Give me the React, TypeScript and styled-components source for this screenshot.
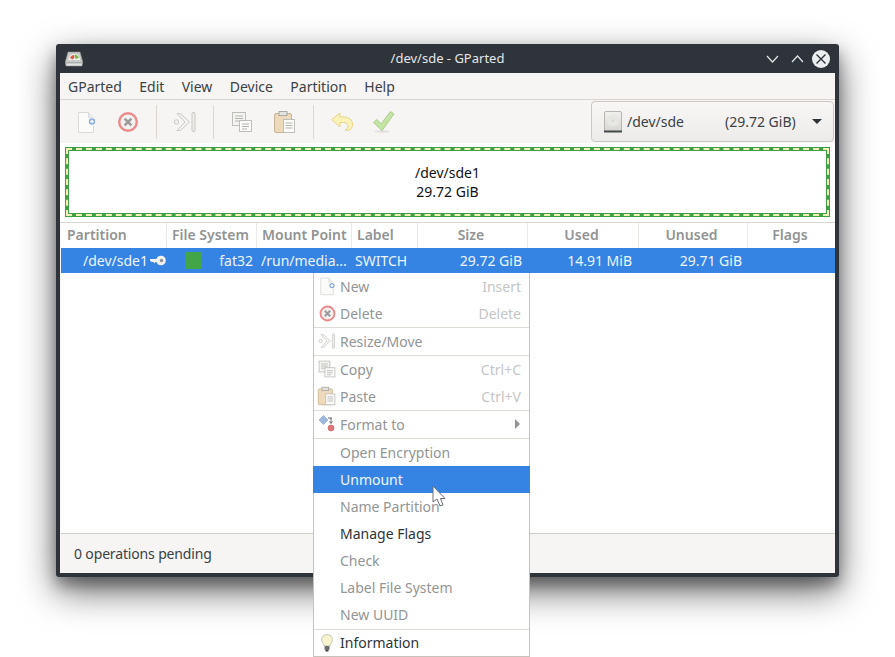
import styled, { createGlobalStyle } from 'styled-components';

const GlobalStyle = createGlobalStyle`
  html, body {
    margin: 0;
    height: 100%;
    background: #fff;
    overflow: hidden;
    font-family: "Noto Sans", sans-serif;
    font-size: 14px;
    color: #2e3436;
  }
`;

const Window = styled.div`
  position: relative;
  width: 783px;
  height: 533px;
  margin: 44px 0 0 56px;
  display: flex;
  flex-direction: column;
  background: #2f343a;
  border-radius: 3px;
  box-shadow: 0 14px 36px rgba(0, 0, 0, 0.6), 0 8px 14px rgba(0, 0, 0, 0.3);
`;

const TitleBar = styled.div`
  position: relative;
  height: 29px;
  flex: none;
  display: flex;
  align-items: center;
  justify-content: space-between;
  padding: 0 9px 0 9px;
  color: #e4e6e8;
  font-size: 13px;
`;

const Title = styled.div`
  position: absolute;
  left: 0;
  right: 0;
  padding-bottom: 2px;
  text-align: center;
`;

const WindowButtons = styled.div`
  display: flex;
  align-items: center;
`;

const CloseButton = styled.svg`
  margin-left: 2px;
`;

const Content = styled.div`
  flex: 1;
  min-height: 0;
  margin: 0 4px 4px;
  display: flex;
  flex-direction: column;
  background: #f6f5f4;
`;

const MenuBar = styled.div`
  height: 27px;
  box-sizing: border-box;
  flex: none;
  display: flex;
  align-items: center;
  gap: 17.4px;
  padding: 0 8px;
  border-bottom: 1px solid #d8d5d1;
  color: #3b4144;
`;

const ToolBar = styled.div`
  height: 43px;
  flex: none;
  display: flex;
  align-items: center;
  padding: 0 1px 0 5px;
`;

const ToolGroup = styled.div<{ $gap?: number }>`
  display: flex;
  gap: ${p => p.$gap ?? 0}px;
`;

const ToolButton = styled.div`
  width: 42px;
  height: 34px;
  display: flex;
  align-items: center;
  justify-content: center;
`;

const ToolSeparator = styled.div`
  width: 1px;
  height: 34px;
  background: #dbd8d4;
  margin: 0 7px;
`;

const DeviceCombo = styled.div`
  margin-left: auto;
  width: 243px;
  height: 41px;
  box-sizing: border-box;
  display: flex;
  align-items: center;
  padding: 0 11px 0 12px;
  border: 1px solid #cdc7c2;
  border-radius: 4px;
  background: linear-gradient(#f8f7f6, #edebe9);
  color: #3b4144;
`;

const DeviceName = styled.span`
  margin-left: 5px;
  width: 98px;
`;

const DeviceSize = styled.span`
  flex: 1;
`;

const ComboArrow = styled.span`
  width: 0;
  height: 0;
  border-top: 5px solid #2e3436;
  border-left: 5px solid transparent;
  border-right: 5px solid transparent;
`;

const GraphArea = styled.div`
  height: 80px;
  flex: none;
  box-sizing: border-box;
  padding: 4px 5px 5px;
  background: #fff;
  border-bottom: 1px solid #d8d5d1;
`;

const GraphOuter = styled.div`
  height: 100%;
  box-sizing: border-box;
  border: 1px solid #3f9f44;
  background: #3f9f44;
`;

const GraphDash = styled.div`
  height: 100%;
  box-sizing: border-box;
  border: 2px dashed #f2f2b8;
`;

const GraphInner = styled.div`
  height: 100%;
  box-sizing: border-box;
  background: #fff;
  display: flex;
  flex-direction: column;
  align-items: center;
  justify-content: center;
  border: 1px solid #3f9f44;
  color: #111;
  line-height: 19px;
`;

const TableArea = styled.div`
  flex: 1;
  min-height: 0;
  margin: 0 0 0 1px;
  background: #fff;
  border-bottom: 1px solid #d0ccc8;
`;

const columns = '105px 90px 95px 66px 110px 111px 109px 88px';

const HeaderRow = styled.div`
  height: 25px;
  display: grid;
  grid-template-columns: ${columns};
`;

const HeaderCell = styled.div<{ $center?: boolean }>`
  display: flex;
  align-items: center;
  justify-content: ${p => (p.$center ? 'center' : 'flex-start')};
  padding-left: ${p => (p.$center ? 0 : 5)}px;
  padding-right: ${p => (p.$center ? 3 : 0)}px;
  padding-bottom: 2px;
  font-weight: 600;
  color: #919394;
  white-space: nowrap;
  border-left: 1px solid #eceae8;
  &:first-child {
    border-left: none;
    padding-left: 6px;
  }
`;

const DataRow = styled.div`
  height: 25px;
  display: grid;
  grid-template-columns: ${columns};
  background: #3584e4;
  color: #eef4fc;
`;

const Cell = styled.div<{ $align?: string; $pad?: number }>`
  display: flex;
  align-items: center;
  justify-content: ${p => p.$align ?? 'flex-start'};
  padding: 0 ${p => (p.$align === 'flex-end' ? (p.$pad ?? 5) : 0)}px 0 ${p => (p.$align === 'flex-end' ? 0 : (p.$pad ?? 0))}px;
  white-space: nowrap;
  min-width: 0;
`;

const FileSystemCell = styled.div`
  display: flex;
  align-items: center;
  justify-content: space-between;
  padding: 0 3px 0 19px;
`;

const Swatch = styled.div`
  width: 17px;
  height: 17px;
  background: #42a548;
`;

const KeyGlyph = styled.svg`
  margin-left: 2px;
  flex: none;
`;

const StatusBar = styled.div`
  height: 39px;
  box-sizing: border-box;
  flex: none;
  display: flex;
  align-items: center;
  padding: 0 14px;
  letter-spacing: -0.15px;
  color: #3b4144;
`;

const ContextMenu = styled.div`
  position: absolute;
  left: 257px;
  top: 229px;
  width: 217px;
  box-sizing: border-box;
  background: #fff;
  border: 1px solid #c6c2bc;
  border-top: none;
`;

const MenuItem = styled.div<{ $disabled?: boolean; $active?: boolean }>`
  height: 27.08px;
  display: flex;
  align-items: center;
  box-sizing: border-box;
  padding: 0 8px 0 ${p => (p.$active ? 6 : 5)}px;
  background: ${p => (p.$active ? '#3584e4' : 'transparent')};
  color: ${p => (p.$active ? '#f0f5fc' : p.$disabled ? '#929595' : '#2e3436')};
  margin: 0 ${p => (p.$active ? -1 : 0)}px;
  &:first-child {
    height: 26.6px;
  }
  &:last-child {
    height: 26.4px;
  }
`;

const MenuIcon = styled.div`
  width: 16px;
  height: 16px;
  margin-right: 5px;
  flex: none;
  display: flex;
  align-items: center;
  justify-content: center;
  svg {
    flex: none;
  }
`;

const Shortcut = styled.span`
  margin-left: auto;
  color: #c4c6c6;
`;

const SubArrow = styled.span`
  margin-left: auto;
  margin-right: 1px;
  width: 0;
  height: 0;
  border-left: 5px solid #929595;
  border-top: 5px solid transparent;
  border-bottom: 5px solid transparent;
`;

const MenuSeparator = styled.div`
  height: 1px;
  background: #dfdcd8;
`;

const Cursor = styled.svg`
  position: absolute;
  left: 376px;
  top: 441px;
`;

const NewIcon = ({ size = 24 }: { size?: number }) => (
  <svg width={size} height={size} viewBox="0 0 24 24">
    <path d="M4.500 2.500h10l5 5v15h-15z" fill="#fbfbfa" stroke="#d9d9d6" />
    <path d="M14.500 2.500v5h5" fill="#eeeeec" stroke="#d9d9d6" />
    <circle cx="18" cy="11.500" r="4" fill="#fff" />
    <circle cx="18" cy="11.500" r="3.200" fill="#8aa9d8" />
    <path d="M18 9.700v3.600M16.200 11.500h3.600" stroke="#fff" strokeWidth="1.300" />
  </svg>
);

const DeleteIcon = ({ size = 24 }: { size?: number }) => (
  <svg width={size} height={size} viewBox="0 0 24 24">
    <circle cx="12" cy="12" r="8.800" fill="#f3f1f0" stroke="#ec8a8a" strokeWidth="2.400" />
    <path d="M8.600 8.600l6.800 6.800M15.400 8.600l-6.800 6.800" stroke="#9b9b9b" strokeWidth="2.600" />
  </svg>
);

const ResizeIcon = ({ size = 24 }: { size?: number }) => (
  <svg width={size} height={size} viewBox="0 0 24 24">
    <path d="M4 3.500l8 8.500-8 8.500 3.500 0 9-8.500-9-8.500z" fill="#f2f2f0" stroke="#c9c9c6" />
    <circle cx="3.500" cy="12" r="2.200" fill="#f4f4f2" stroke="#c9c9c6" />
    <rect x="19" y="2.500" width="3" height="19" rx="1" fill="#ececea" stroke="#c9c9c6" />
  </svg>
);

const CopyIcon = ({ size = 24 }: { size?: number }) => (
  <svg width={size} height={size} viewBox="0 0 24 24">
    <rect x="2.500" y="2.500" width="13" height="13" fill="#f4f4f2" stroke="#bdbdba" />
    <path d="M5 6h8M5 8.500h8M5 11h5" stroke="#b2b2af" />
    <rect x="9.500" y="10.500" width="12" height="11" fill="#fbfbfa" stroke="#bdbdba" />
    <path d="M12 14h7M12 16.500h7M12 19h5" stroke="#b2b2af" />
  </svg>
);

const PasteIcon = ({ size = 24 }: { size?: number }) => (
  <svg width={size} height={size} viewBox="0 0 24 24">
    <rect x="1.500" y="3.500" width="17" height="19" rx="1.500" fill="#efd9bb" stroke="#c7b395" />
    <rect x="6" y="1.500" width="8" height="4" fill="#e3e3e0" stroke="#a9a9a6" />
    <rect x="10.500" y="9.500" width="11" height="13" fill="#fbfbfa" stroke="#bdbdba" />
    <path d="M12.500 13h7M12.500 15.500h7M12.500 18h7" stroke="#b2b2af" />
  </svg>
);

const UndoIcon = () => (
  <svg width="24" height="24" viewBox="0 0 24 24">
    <path
      d="M1.500 9.500L10 3v4h4c5 0 8.500 3 8.500 7.500 0 3-1.500 5-3.500 6l-4-.5c2.500-1 3.500-2.500 3-4.500-.5-2-2-3-4.500-3H10v4.500z"
      fill="#faf2b8"
      stroke="#e6d586"
    />
  </svg>
);

const ApplyIcon = () => (
  <svg width="24" height="24" viewBox="0 0 24 24">
    <ellipse cx="10" cy="21.500" rx="8" ry="1.500" fill="#e4e3e0" />
    <path
      d="M1.500 12.500l3.500-3 4 4.500L18.500 1.500l3.500 2.500L10 20.500z"
      fill="#c6e4a8"
      stroke="#a6d088"
    />
  </svg>
);

const DiskIcon = () => (
  <svg width="18" height="22" viewBox="0 0 18 22">
    <defs>
      <linearGradient id="disk" x1="0" y1="0" x2="0" y2="1">
        <stop offset="0" stopColor="#f0f0ee" />
        <stop offset="1" stopColor="#d6d6d3" />
      </linearGradient>
    </defs>
    <rect x="0.500" y="0.500" width="17" height="20" rx="1.500" fill="url(#disk)" stroke="#b5b5b2" />
    <circle cx="9" cy="9.500" r="6" fill="#e6e6e3" />
    <circle cx="9" cy="9.500" r="1" fill="#cfcfcc" />
    <rect x="0" y="19.500" width="18" height="2" fill="#45484a" />
  </svg>
);

const KeyIcon = () => (
  <KeyGlyph width="16" height="11" viewBox="0 0 16 11">
    <path d="M0 4h8v3H5.500L4.500 8.500 3.500 7H1.500L0 5.500z" fill="#f2f2f0" />
    <circle cx="11" cy="5.500" r="4.800" fill="#f2f2f0" />
    <circle cx="11.500" cy="5.500" r="1.700" fill="#8d8f90" />
  </KeyGlyph>
);

const LogoIcon = () => (
  <svg width="18" height="16" viewBox="0 0 18 16">
    <path d="M3 1h12l3 11H0z" fill="#c9cbc8" stroke="#8e9190" strokeWidth="0.600" />
    <path d="M3.500 9C4 4.500 7 3 9.500 3s5 1.500 5.500 6z" fill="#f4f4ef" />
    <path d="M5 7c.8-1.800 2-2.700 4-3l.5 2.500-2 2z" fill="#d9564a" />
    <path d="M9.500 3.500c2 0 3.700 1.300 4.500 3.500l-3.500 1z" fill="#79b84a" />
    <path d="M0.500 12h17l-.5 3H1z" fill="#e3e4e2" stroke="#8e9190" strokeWidth="0.600" />
  </svg>
);

const FormatIcon = () => (
  <svg width="16" height="18" viewBox="0 0 16 18">
    <path d="M0 5l4.500-4.500L9 5l-4.500 4.500z" fill="#9db8dc" stroke="#7f9cc6" strokeWidth="0.600" />
    <path d="M9 3h4M12 3v5M10.500 6.500l1.500 2 1.500-2" fill="none" stroke="#666" strokeWidth="1" />
    <circle cx="12" cy="13" r="3" fill="#de7777" stroke="#c25a5a" strokeWidth="0.600" />
  </svg>
);

const BulbIcon = () => (
  <svg width="16" height="18" viewBox="0 0 16 18">
    <path
      d="M8 .5c3.500 0 5.500 2.500 5.500 5 0 2.500-2.200 3.800-2.700 6.500H5.200C4.700 9.300 2.500 8 2.500 5.500c0-2.500 2-5 5.500-5z"
      fill="#f5f4cf"
      stroke="#b9b9a0"
      strokeWidth="0.800"
    />
    <rect x="5.500" y="12" width="5" height="4" rx="1" fill="#6b6e6e" />
    <rect x="6.500" y="16" width="3" height="1.500" fill="#3f4242" />
  </svg>
);

const ChevronDown = () => (
  <svg width="25" height="14" viewBox="0 0 25 14">
    <path d="M7 4l5.500 6L18 4" fill="none" stroke="#e4e6e8" strokeWidth="1.200" />
  </svg>
);

const ChevronUp = () => (
  <svg width="25" height="14" viewBox="0 0 25 14">
    <path d="M7 10l5.500-6L18 10" fill="none" stroke="#e4e6e8" strokeWidth="1.200" />
  </svg>
);

const CloseIcon = () => (
  <CloseButton width="18" height="18" viewBox="0 0 18 18">
    <circle cx="9" cy="9" r="9" fill="#eceef0" />
    <path d="M4.500 4.500l9 9M13.500 4.500l-9 9" stroke="#2f343a" strokeWidth="1.400" />
  </CloseButton>
);

const headers = ['Partition', 'File System', 'Mount Point', 'Label'];
const centered = ['Size', 'Used', 'Unused', 'Flags'];

export default function App() {
  return (
    <>
      <GlobalStyle />
      <Window>
        <TitleBar>
          <LogoIcon />
          <Title>/dev/sde - GParted</Title>
          <WindowButtons>
            <ChevronDown />
            <ChevronUp />
            <CloseIcon />
          </WindowButtons>
        </TitleBar>
        <Content>
          <MenuBar>
            {['GParted', 'Edit', 'View', 'Device', 'Partition', 'Help'].map(m => (
              <span key={m}>{m}</span>
            ))}
          </MenuBar>
          <ToolBar>
            <ToolGroup>
              <ToolButton><NewIcon /></ToolButton>
              <ToolButton><DeleteIcon /></ToolButton>
            </ToolGroup>
            <ToolSeparator />
            <ToolButton><ResizeIcon /></ToolButton>
            <ToolSeparator />
            <ToolGroup $gap={1}>
              <ToolButton><CopyIcon /></ToolButton>
              <ToolButton><PasteIcon /></ToolButton>
            </ToolGroup>
            <ToolSeparator />
            <ToolGroup>
              <ToolButton><UndoIcon /></ToolButton>
              <ToolButton><ApplyIcon /></ToolButton>
            </ToolGroup>
            <DeviceCombo>
              <DiskIcon />
              <DeviceName>/dev/sde</DeviceName>
              <DeviceSize>(29.72 GiB)</DeviceSize>
              <ComboArrow />
            </DeviceCombo>
          </ToolBar>
          <GraphArea>
            <GraphOuter>
              <GraphDash>
                <GraphInner>
                  <div>/dev/sde1</div>
                  <div>29.72 GiB</div>
                </GraphInner>
              </GraphDash>
            </GraphOuter>
          </GraphArea>
          <TableArea>
            <HeaderRow>
              {headers.map(h => <HeaderCell key={h}>{h}</HeaderCell>)}
              {centered.map(h => <HeaderCell key={h} $center>{h}</HeaderCell>)}
            </HeaderRow>
            <DataRow>
              <Cell $pad={22}>/dev/sde1<KeyIcon /></Cell>
              <FileSystemCell><Swatch />fat32</FileSystemCell>
              <Cell $pad={5}>/run/media...</Cell>
              <Cell $pad={4}>SWITCH</Cell>
              <Cell $align="flex-end">29.72 GiB</Cell>
              <Cell $align="flex-end" $pad={6}>14.91 MiB</Cell>
              <Cell $align="flex-end" $pad={5}>29.71 GiB</Cell>
              <Cell />
            </DataRow>
          </TableArea>
          <StatusBar>0 operations pending</StatusBar>
        </Content>
        <ContextMenu>
          <MenuItem $disabled><MenuIcon><NewIcon size={20} /></MenuIcon>New<Shortcut>Insert</Shortcut></MenuItem>
          <MenuItem $disabled><MenuIcon><DeleteIcon size={19} /></MenuIcon>Delete<Shortcut>Delete</Shortcut></MenuItem>
          <MenuSeparator />
          <MenuItem $disabled><MenuIcon><ResizeIcon size={18} /></MenuIcon>Resize/Move</MenuItem>
          <MenuSeparator />
          <MenuItem $disabled><MenuIcon><CopyIcon size={20} /></MenuIcon>Copy<Shortcut>Ctrl+C</Shortcut></MenuItem>
          <MenuItem $disabled><MenuIcon><PasteIcon size={20} /></MenuIcon>Paste<Shortcut>Ctrl+V</Shortcut></MenuItem>
          <MenuSeparator />
          <MenuItem $disabled><MenuIcon><FormatIcon /></MenuIcon>Format to<SubArrow /></MenuItem>
          <MenuSeparator />
          <MenuItem $disabled><MenuIcon />Open Encryption</MenuItem>
          <MenuItem $active><MenuIcon />Unmount</MenuItem>
          <MenuItem $disabled><MenuIcon />Name Partition</MenuItem>
          <MenuItem><MenuIcon />Manage Flags</MenuItem>
          <MenuItem $disabled><MenuIcon />Check</MenuItem>
          <MenuItem $disabled><MenuIcon />Label File System</MenuItem>
          <MenuItem $disabled><MenuIcon />New UUID</MenuItem>
          <MenuSeparator />
          <MenuItem><MenuIcon><BulbIcon /></MenuIcon>Information</MenuItem>
        </ContextMenu>
        <Cursor width="14" height="23" viewBox="0 0 14 23">
          <path d="M1 1v16l4-3 3 7 3-1-2.500-6.500h4.500z" fill="#fff" stroke="#6b6e70" strokeWidth="1" />
        </Cursor>
      </Window>
    </>
  );
}
